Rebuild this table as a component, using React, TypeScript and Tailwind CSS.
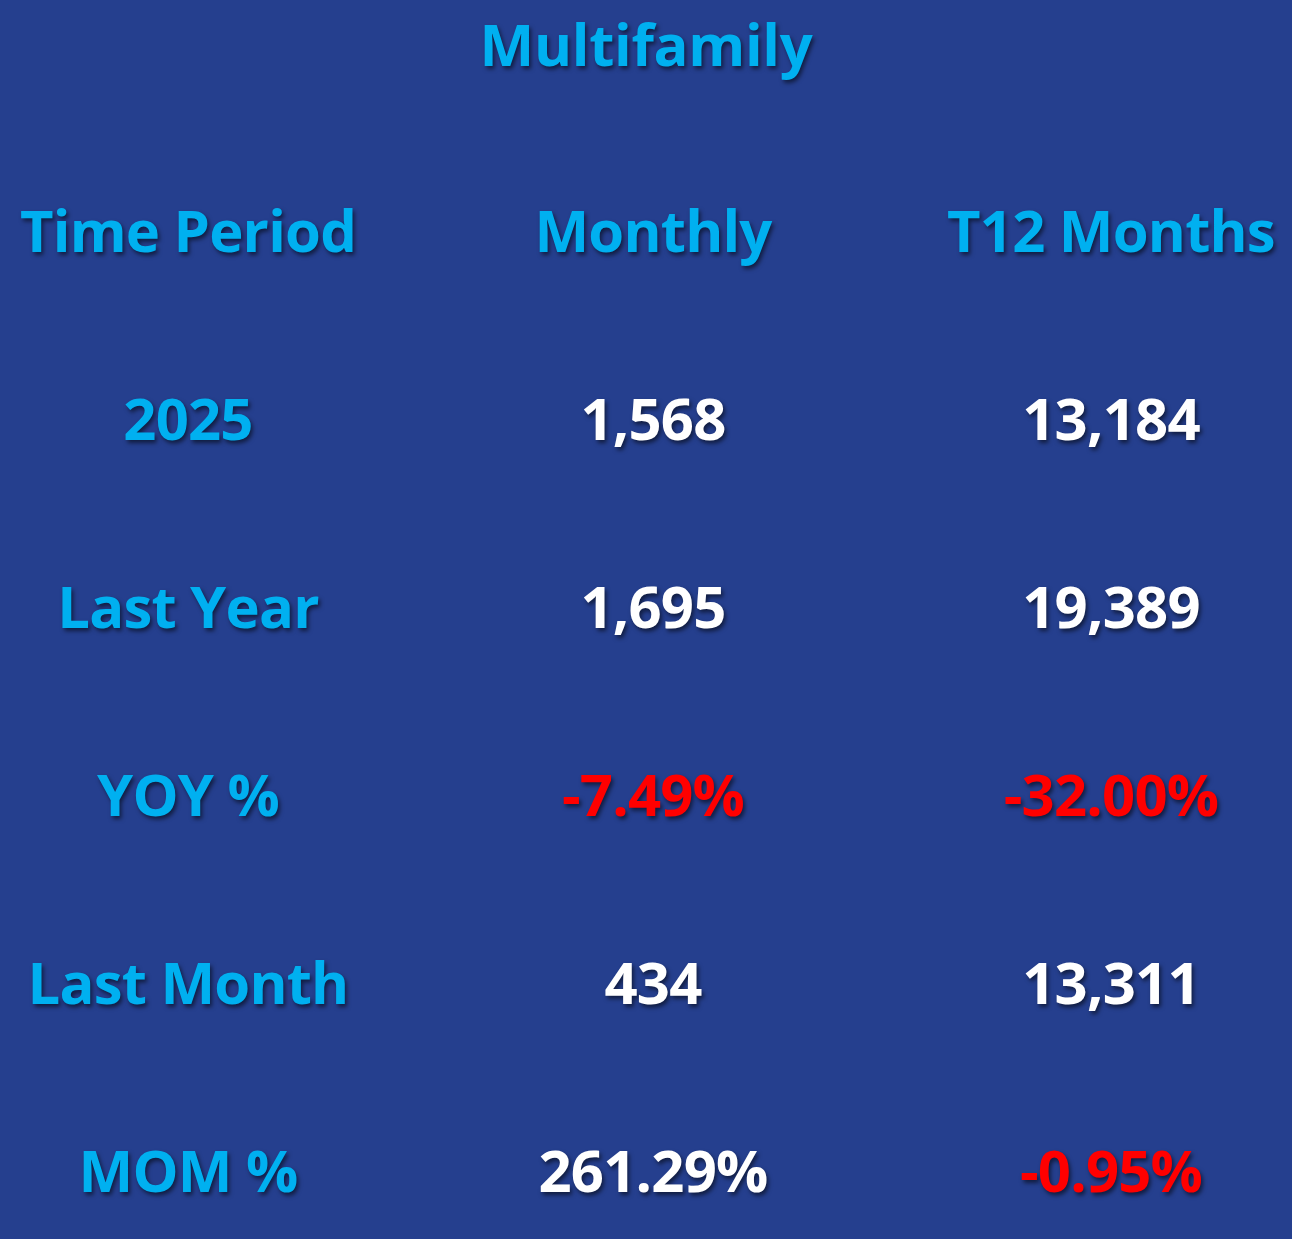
const rows = [
  { label: "2025", monthly: "1,568", t12: "13,184", mRed: false, tRed: false },
  { label: "Last Year", monthly: "1,695", t12: "19,389", mRed: false, tRed: false },
  { label: "YOY %", monthly: "-7.49%", t12: "-32.00%", mRed: true, tRed: true },
  { label: "Last Month", monthly: "434", t12: "13,311", mRed: false, tRed: false },
  { label: "MOM %", monthly: "261.29%", t12: "-0.95%", mRed: false, tRed: true },
];

const shadow = "[text-shadow:2px_3px_4px_rgba(0,0,0,0.55)]";

export default function App() {
  return (
    <div
      className="h-[1239px] w-[1292px] overflow-hidden bg-[#253f8e]"
      style={{ fontFamily: '"Open Sans", "Liberation Sans", sans-serif' }}
    >
      <div className="flex h-[88px] items-center justify-center">
        <h1 className={`text-[58px] leading-none font-bold tracking-[-0.3px] text-[#00b0f0] ${shadow}`}>
          Multifamily
        </h1>
      </div>
      <div className="h-[48px]" />
      <div className="grid grid-cols-[376px_554px_362px] text-[58px] leading-none font-bold tracking-[-0.8px]">
        <div className={`flex h-[188px] items-center justify-center text-[#00b0f0] ${shadow}`}>Time Period</div>
        <div className={`flex h-[188px] items-center justify-center text-[#00b0f0] ${shadow}`}>Monthly</div>
        <div className={`flex h-[188px] items-center justify-center text-[#00b0f0] ${shadow}`}>T12 Months</div>
        {rows.map((r) => (
          <div key={r.label} className="contents">
            <div className={`flex h-[188px] items-center justify-center text-[#00b0f0] ${shadow}`}>{r.label}</div>
            <div
              className={`flex h-[188px] items-center justify-center ${shadow} ${
                r.mRed ? "text-[#ff0000]" : "text-white"
              }`}
            >
              {r.monthly}
            </div>
            <div
              className={`flex h-[188px] items-center justify-center ${shadow} ${
                r.tRed ? "text-[#ff0000]" : "text-white"
              }`}
            >
              {r.t12}
            </div>
          </div>
        ))}
      </div>
    </div>
  );
}
